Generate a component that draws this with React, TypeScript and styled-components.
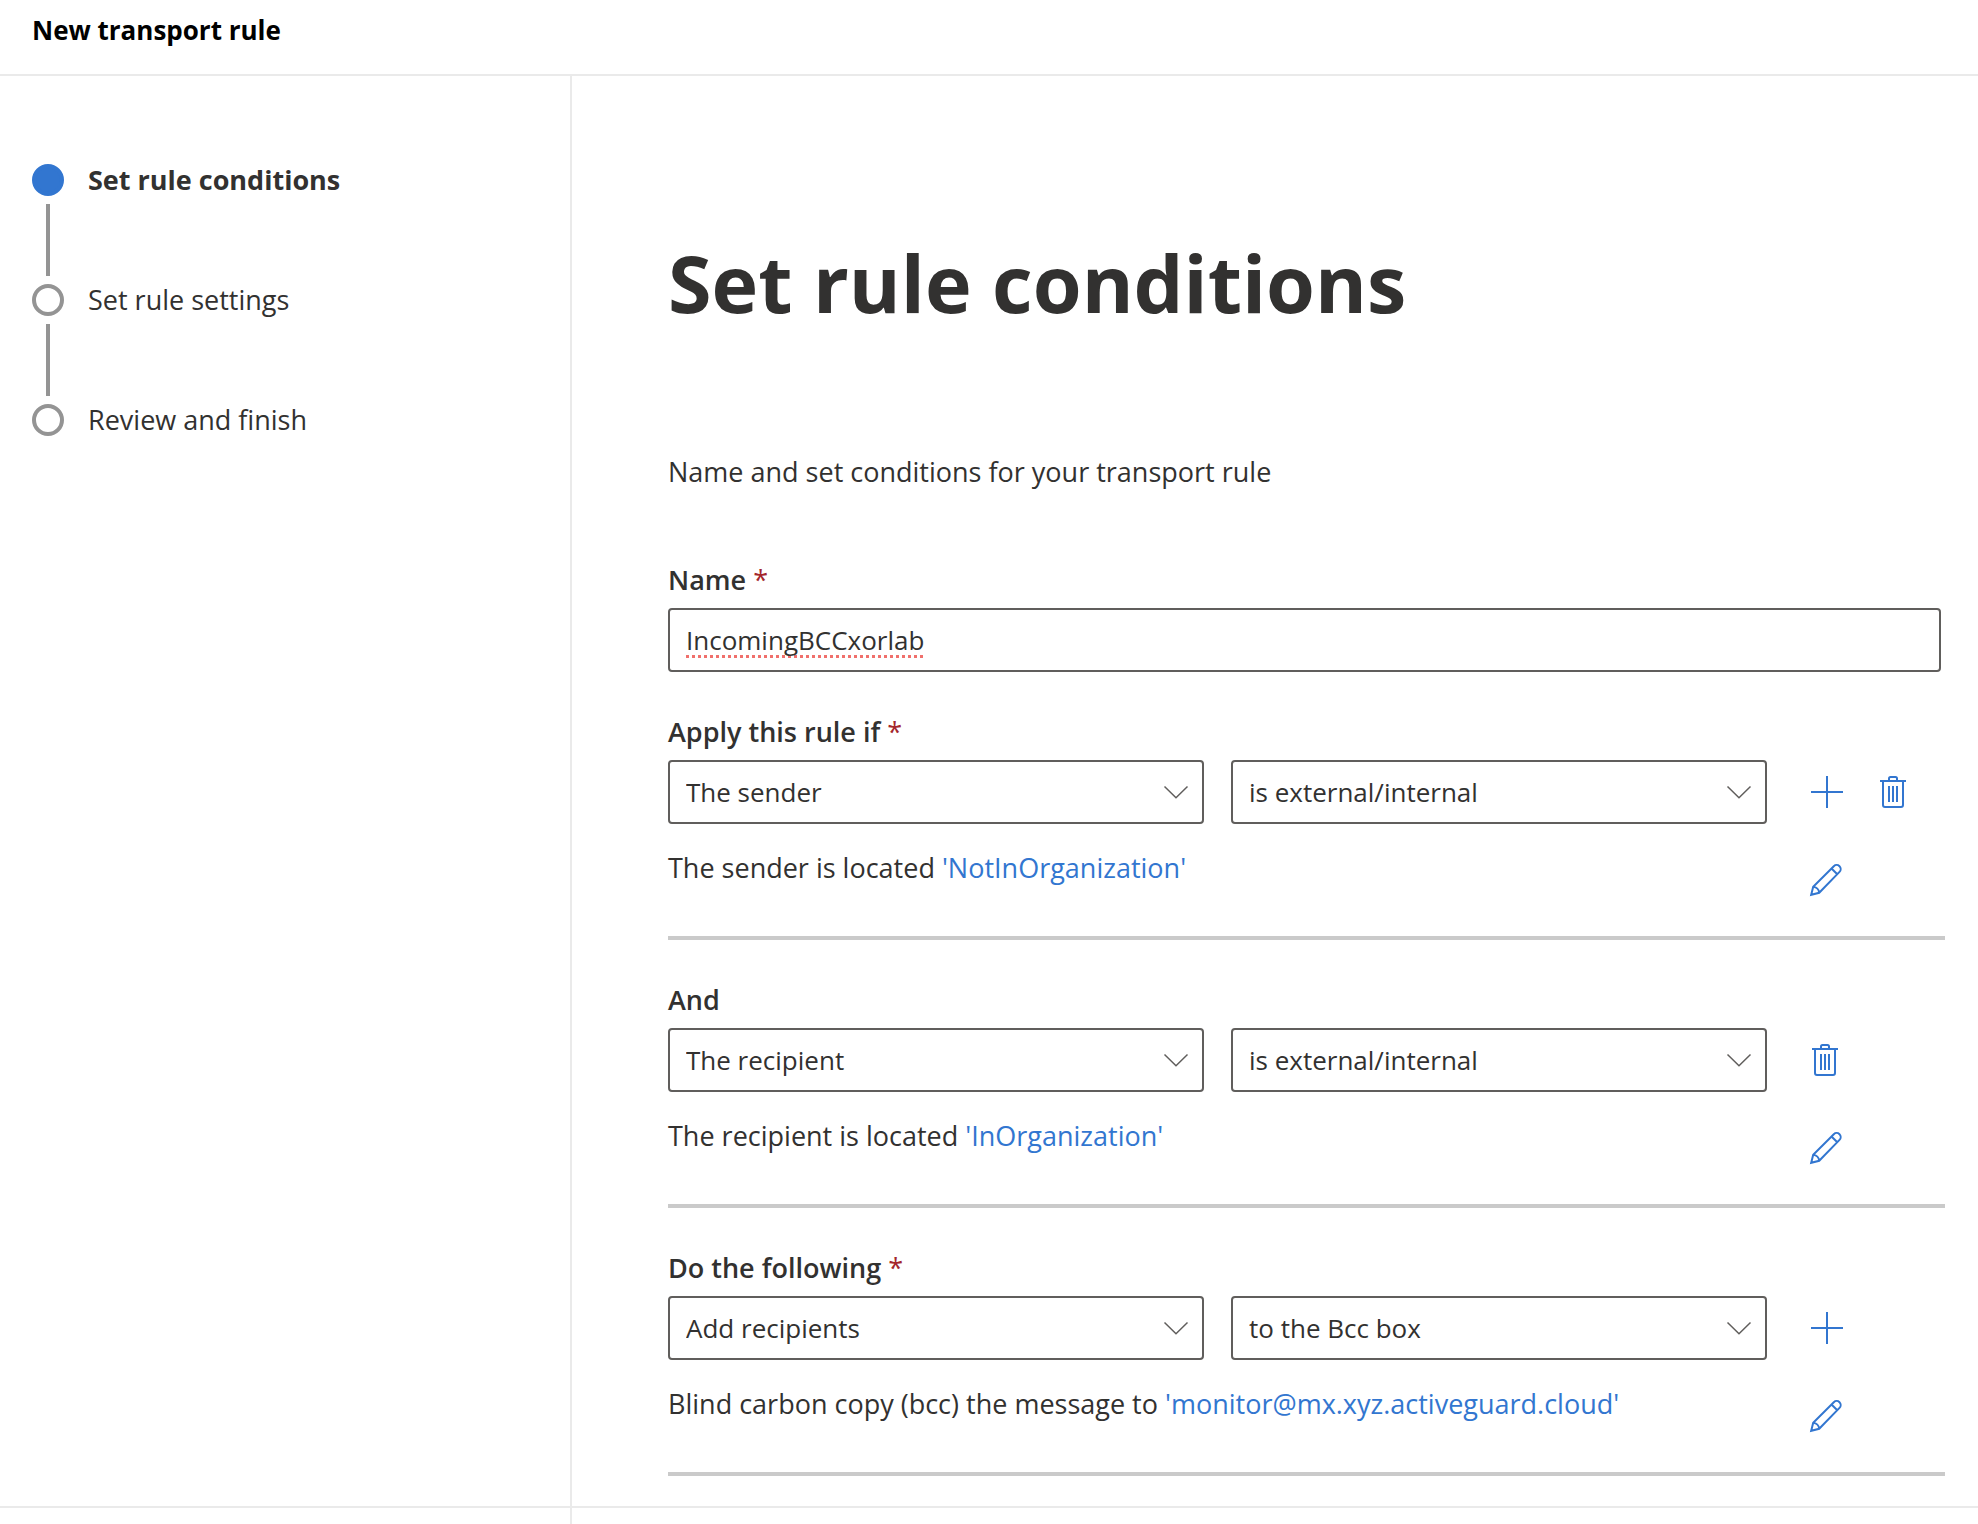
import React, { useState } from "react";
import styled, { createGlobalStyle } from "styled-components";

const GlobalStyle = createGlobalStyle`
  *, *::before, *::after { box-sizing: border-box; }
  body {
    margin: 0;
    background: #ffffff;
    color: #323130;
    font-family: "Open Sans", "Noto Sans", sans-serif;
    font-size: 27px;
    line-height: 40px;
  }
`;

const Page = styled.div`
  display: flex;
  flex-direction: column;
  min-height: 100vh;
`;

const Header = styled.header`
  padding: 10px 32px 24px;
  border-bottom: 2px solid #eaeaea;
  color: #000000;
  font-size: 26px;
  font-weight: 700;
`;

const Columns = styled.div`
  display: grid;
  grid-template-columns: 572px minmax(0, 1fr);
  flex: 1;
`;

const Sidebar = styled.nav`
  padding: 84px 32px 0;
  border-right: 2px solid #eaeaea;
`;

const StepList = styled.ol`
  display: flex;
  flex-direction: column;
  gap: 8px;
  margin: 0;
  padding: 0;
  list-style: none;
`;

const Step = styled.li`
  display: flex;
  flex-direction: column;
`;

const StepLabel = styled.div<{ $active?: boolean }>`
  display: flex;
  align-items: center;
  gap: 24px;
  font-weight: ${(p) => (p.$active ? 700 : 400)};
`;

const StepDot = styled.span<{ $active?: boolean }>`
  width: 32px;
  height: 32px;
  border: 4px solid ${(p) => (p.$active ? "#3276d0" : "#949494")};
  border-radius: 50%;
  background: ${(p) => (p.$active ? "#3276d0" : "#ffffff")};
`;

const StepLine = styled.span`
  width: 4px;
  height: 72px;
  margin: 4px 0 -4px 14px;
  background: #949494;
`;

const Main = styled.main`
  padding: 151px 33px 30px 96px;
`;

const Title = styled.h1`
  margin: 0;
  font-size: 79px;
  line-height: 112px;
  font-weight: 700;
`;

const Intro = styled.p`
  margin: 113px 0 28px;
`;

const Field = styled.div`
  padding-top: 40px;
`;

const labelText = `
  display: block;
  margin: 0 0 8px;
  padding: 0;
  font-weight: 600;
`;

const Label = styled.label`${labelText}`;
const GroupLabel = styled.h2`
  ${labelText}
  font-size: inherit;
  line-height: inherit;
`;

const Required = styled.span`
  color: #a4262c;
  font-weight: 400;
`;

const NameBox = styled.div`
  padding-right: 4px;
`;

const NameInput = styled.input`
  display: block;
  width: 100%;
  height: 64px;
  padding: 0 16px;
  border: 2px solid #605e5c;
  border-radius: 4px;
  background: #ffffff;
  color: inherit;
  font: inherit;
  font-size: 26px;
  outline: none;
  text-decoration: underline dotted #f0706c 3px;
  text-underline-offset: 5px;
  text-decoration-skip-ink: none;
`;

const Group = styled.section`
  padding-top: 40px;
  border-bottom: 4px solid #cacaca;
`;

const GroupRow = styled.div`
  display: grid;
  grid-template-columns: minmax(0, 1fr) 178px;
  align-items: center;
`;

const Selects = styled.div`
  display: grid;
  grid-template-columns: repeat(2, minmax(0, 1fr));
  gap: 27px;
`;

const SelectBox = styled.div`
  display: grid;
  align-items: center;

  > * { grid-area: 1 / 1; }
  > svg {
    justify-self: end;
    margin-right: 14px;
    pointer-events: none;
  }
`;

const SelectControl = styled.select`
  appearance: none;
  width: 100%;
  height: 64px;
  padding: 0 56px 0 16px;
  border: 2px solid #605e5c;
  border-radius: 4px;
  background: #ffffff;
  color: inherit;
  font: inherit;
  font-size: 26px;
`;

const Actions = styled.div`
  display: flex;
  gap: 36px;
  padding-left: 43px;
`;

const IconButton = styled.button`
  display: flex;
  width: 32px;
  height: 32px;
  padding: 0;
  border: 0;
  background: none;
  color: #3276d0;
  cursor: pointer;

  > svg { overflow: visible; }
`;

const DetailRow = styled(GroupRow)`
  align-items: start;
  min-height: 112px;
  padding-top: 24px;

  ${Actions} { padding-top: 16px; }
`;

const Detail = styled.p`
  margin: 0;
`;

const ValueLink = styled.a`
  color: #3276d0;
  text-decoration: none;
`;

const Footer = styled.footer`
  display: grid;
  grid-template-columns: 572px minmax(0, 1fr);
  height: 18px;
  border-top: 2px solid #eaeaea;

  &::before {
    content: "";
    border-right: 2px solid #eaeaea;
  }
`;

const ChevronIcon = () => (
  <svg width="28" height="16" viewBox="0 0 28 16" fill="none" stroke="#605e5c" strokeWidth="1.5" aria-hidden="true">
    <path d="M2.5 2.5 14 13.8 25.5 2.5" />
  </svg>
);

const PlusIcon = () => (
  <svg width="32" height="32" viewBox="-1 0 32 32" fill="none" stroke="currentColor" strokeWidth="2" aria-hidden="true">
    <path d="M16 0v32M0 16h32" />
  </svg>
);

const TrashIcon = () => (
  <svg width="32" height="32" viewBox="-2 0 32 32" fill="none" stroke="currentColor" strokeWidth="2" aria-hidden="true">
    <path d="M0 5h26M9 5V2.5Q9 1 10.500 1h5Q17 1 17 2.500V5M3 5v24q0 2 2 2h16q2 0 2-2V5M9 10v16M13 10v16M17 10v16" />
  </svg>
);

const PencilIcon = () => (
  <svg width="32" height="32" viewBox="0 0 32 32" fill="none" stroke="currentColor" strokeWidth="2" aria-hidden="true">
    <path d="M1.200 30.800 3.200 22.800 23.800 2.200a4 4 0 0 1 5.700 5.700L9.200 28.800ZM21.500 4.500l5.800 5.800M3.200 22.800a6.500 6.500 0 0 1 6 6" />
  </svg>
);

type Action = "add" | "delete";

interface Rule {
  id: string;
  label: string;
  required?: boolean;
  subject: string;
  predicate: string;
  detail: string;
  value: string;
  actions: Action[];
}

const RULES: Rule[] = [
  {
    id: "if",
    label: "Apply this rule if",
    required: true,
    subject: "The sender",
    predicate: "is external/internal",
    detail: "The sender is located",
    value: "'NotInOrganization'",
    actions: ["add", "delete"],
  },
  {
    id: "and",
    label: "And",
    subject: "The recipient",
    predicate: "is external/internal",
    detail: "The recipient is located",
    value: "'InOrganization'",
    actions: ["delete"],
  },
  {
    id: "do",
    label: "Do the following",
    required: true,
    subject: "Add recipients",
    predicate: "to the Bcc box",
    detail: "Blind carbon copy (bcc) the message to",
    value: "'monitor@mx.xyz.activeguard.cloud'",
    actions: ["add"],
  },
];

const STEPS = ["Set rule conditions", "Set rule settings", "Review and finish"];

function Dropdown({ id, label, value }: { id: string; label: string; value: string }) {
  return (
    <SelectBox>
      <SelectControl id={id} aria-label={label} defaultValue={value}>
        <option>{value}</option>
      </SelectControl>
      <ChevronIcon />
    </SelectBox>
  );
}

function RuleGroup({ rule }: { rule: Rule }) {
  return (
    <Group aria-labelledby={`${rule.id}-label`}>
      <GroupLabel id={`${rule.id}-label`}>
        {rule.label}
        {rule.required && <Required> *</Required>}
      </GroupLabel>
      <GroupRow>
        <Selects>
          <Dropdown id={`${rule.id}-subject`} label={rule.label} value={rule.subject} />
          <Dropdown id={`${rule.id}-predicate`} label={rule.label} value={rule.predicate} />
        </Selects>
        <Actions>
          {rule.actions.map((action) => (
            <IconButton key={action} type="button" aria-label={action}>
              {action === "add" ? <PlusIcon /> : <TrashIcon />}
            </IconButton>
          ))}
        </Actions>
      </GroupRow>
      <DetailRow>
        <Detail>
          {rule.detail} <ValueLink href="#">{rule.value}</ValueLink>
        </Detail>
        <Actions>
          <IconButton type="button" aria-label="edit">
            <PencilIcon />
          </IconButton>
        </Actions>
      </DetailRow>
    </Group>
  );
}

export default function App() {
  const [name, setName] = useState("IncomingBCCxorlab");

  return (
    <Page>
      <GlobalStyle />
      <Header>New transport rule</Header>
      <Columns>
        <Sidebar aria-label="Steps">
          <StepList>
            {STEPS.map((step, i) => (
              <Step key={step} aria-current={i === 0 ? "step" : undefined}>
                <StepLabel $active={i === 0}>
                  <StepDot $active={i === 0} />
                  {step}
                </StepLabel>
                {i < STEPS.length - 1 && <StepLine />}
              </Step>
            ))}
          </StepList>
        </Sidebar>
        <Main>
          <Title>Set rule conditions</Title>
          <Intro>Name and set conditions for your transport rule</Intro>
          <Field>
            <Label htmlFor="rule-name">
              Name<Required> *</Required>
            </Label>
            <NameBox>
              <NameInput
                id="rule-name"
                value={name}
                spellCheck={false}
                onChange={(e) => setName(e.target.value)}
              />
            </NameBox>
          </Field>
          {RULES.map((rule) => (
            <RuleGroup key={rule.id} rule={rule} />
          ))}
        </Main>
      </Columns>
      <Footer />
    </Page>
  );
}
